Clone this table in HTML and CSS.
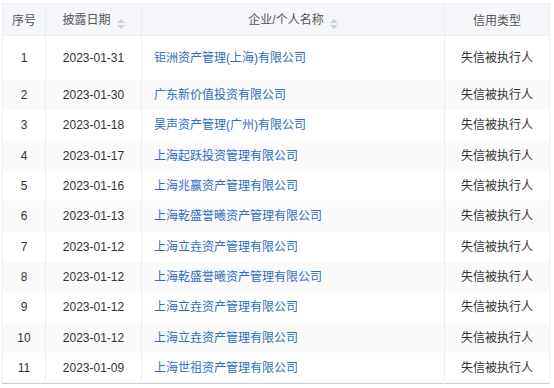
FILE: index.html
```html
<!DOCTYPE html>
<html lang="zh-CN">
<head>
<meta charset="utf-8">
<link rel="stylesheet" href="styles.css">
</head>
<body>
<div class="wrap">
<table class="grid">
  <colgroup>
    <col class="c1"><col class="c2"><col class="c3"><col class="c4">
  </colgroup>
  <thead>
    <tr>
      <th>序号</th>
      <th>披露日期<span class="sort"><i class="up"></i><i class="down"></i></span></th>
      <th>企业/个人名称<span class="sort"><i class="up"></i><i class="down"></i></span></th>
      <th>信用类型</th>
    </tr>
  </thead>
  <tbody>
    <tr class="first"><td>1</td><td>2023-01-31</td><td class="name"><a>钜洲资产管理(上海)有限公司</a></td><td>失信被执行人</td></tr>
    <tr><td>2</td><td>2023-01-30</td><td class="name"><a>广东新价值投资有限公司</a></td><td>失信被执行人</td></tr>
    <tr><td>3</td><td>2023-01-18</td><td class="name"><a>昊声资产管理(广州)有限公司</a></td><td>失信被执行人</td></tr>
    <tr><td>4</td><td>2023-01-17</td><td class="name"><a>上海起跃投资管理有限公司</a></td><td>失信被执行人</td></tr>
    <tr><td>5</td><td>2023-01-16</td><td class="name"><a>上海兆赢资产管理有限公司</a></td><td>失信被执行人</td></tr>
    <tr><td>6</td><td>2023-01-13</td><td class="name"><a>上海乾盛誉曦资产管理有限公司</a></td><td>失信被执行人</td></tr>
    <tr><td>7</td><td>2023-01-12</td><td class="name"><a>上海立垚资产管理有限公司</a></td><td>失信被执行人</td></tr>
    <tr><td>8</td><td>2023-01-12</td><td class="name"><a>上海乾盛誉曦资产管理有限公司</a></td><td>失信被执行人</td></tr>
    <tr><td>9</td><td>2023-01-12</td><td class="name"><a>上海立垚资产管理有限公司</a></td><td>失信被执行人</td></tr>
    <tr><td>10</td><td>2023-01-12</td><td class="name"><a>上海立垚资产管理有限公司</a></td><td>失信被执行人</td></tr>
    <tr><td>11</td><td>2023-01-09</td><td class="name"><a>上海世祖资产管理有限公司</a></td><td>失信被执行人</td></tr>
  </tbody>
</table>
</div>
</body>
</html>
```

FILE: styles.css
```css
html, body {
  margin: 0;
  padding: 0;
  background: #ffffff;
}
.wrap {
  padding: 3px 0 0 2px;
  width: 548px;
}
.grid {
  border-collapse: collapse;
  table-layout: fixed;
  width: 547px;
  font-family: "Liberation Sans", "Noto Sans CJK SC", sans-serif;
  font-size: 12px;
  color: #333333;
  border: 1px solid #ebeef5;
  border-bottom: 1px solid #c8ccd4;
}
.c1 { width: 43px; }
.c2 { width: 96px; }
.c3 { width: 303px; }
.c4 { width: 105px; }
th {
  height: 31px;
  padding: 0;
  font-weight: normal;
  color: #555555;
  background: #f5f7fa;
  text-align: center;
  border-right: 1px solid #ebeef5;
  border-bottom: 1px solid #ebeef5;
}
td {
  height: 30.33px;
  padding: 0;
  text-align: center;
  border-right: 1px solid #ebeef5;
  line-height: 14px;
}
tr.first td {
  height: 44px;
}
tbody tr:nth-child(even) td {
  background: #fafafa;
}
td.name {
  text-align: left;
  padding-left: 12px;
}
td.name a {
  color: #2e6dbf;
  text-decoration: none;
}
.sort {
  display: inline-flex;
  flex-direction: column;
  gap: 2px;
  margin-left: 6px;
  vertical-align: 1px;
}
.sort i {
  display: block;
  width: 0;
  height: 0;
  border-left: 4px solid transparent;
  border-right: 4px solid transparent;
}
.sort .up {
  border-bottom: 4px solid #d0d4da;
}
.sort .down {
  border-top: 4px solid #d0d4da;
}
```
